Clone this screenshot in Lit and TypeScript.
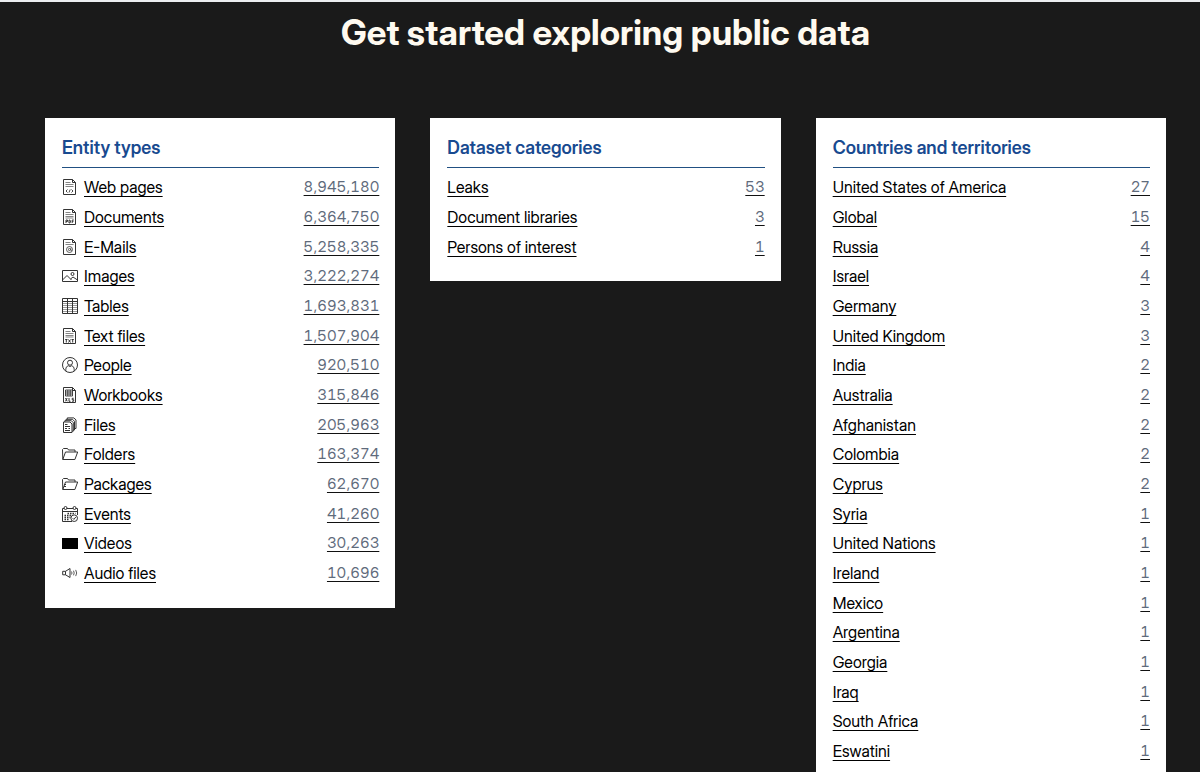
import { LitElement, html, svg, css, nothing } from "lit";
import { customElement, property } from "lit/decorators.js";

type Row = { label: string; count: string; icon?: string };

const sheet = svg`<path d="M1.5.5h9l3 3v12h-12zM10.5.5v3h3" /><path d="M3.5 3.5h5M3.5 5.5h8M3.5 7.5h8" stroke="#666" stroke-width=".8" />`;

const icons: Record<string, unknown> = {
  web: svg`${sheet}<path d="M5.500 10.500L4 12l1.500 1.500M9.500 10.500L11 12l-1.500 1.500M8.200 10.500l-1.200 3" stroke-width=".9" />`,
  pdf: svg`${sheet}<path d="M3.500 9h8" stroke="#666" stroke-width=".8" /><path d="M4 14v-3h1.500v1.500H4M7 11v3h.8l.6-1v-1l-.6-1zM10.200 14v-3h1.600M10.200 12.500h1.200" />`,
  mail: svg`<path d="M1.500.5h9l3 3v12h-12zM10.500.5v3h3" /><path d="M3.500 3.500h5M3.500 5.500h8" stroke="#666" stroke-width=".8" /><circle cx="7.500" cy="10.500" r="3" stroke-width=".8" /><circle cx="7.500" cy="10.500" r="1.100" stroke-width=".8" /><path d="M8.700 9.300v1.700l1.300.5" stroke-width=".7" />`,
  image: svg`<path d="M.5 2.500h15v11H.5zM.5 12l4.500-4.500 4.500 4.500M8.500 11l2.500-2 4.500 3" /><circle cx="10.500" cy="6" r="1.500" />`,
  table: svg`<path d="M.5.5h15v15H.5zM.5 3.500h15M5.500.5v15M10.500.5v15" /><path d="M.5 5.500h15M.5 7.500h15M.5 9.500h15M.5 11.500h15M.5 13.500h15" stroke-width=".5" />`,
  text: svg`${sheet}<path d="M3.500 9h8" stroke="#666" stroke-width=".8" /><path d="M3.200 11.500h2.300M4.300 11.500v3M6.500 11.500l2 3M8.500 11.500l-2 3M9.500 11.500h2.300M10.700 11.500v3" />`,
  person: svg`<circle cx="8" cy="8" r="7.500" /><circle cx="8" cy="5.700" r="2.500" /><path d="M3.800 14v-1.500c0-2 1-3.300 2.500-3.800l1.700.8 1.700-.8c1.500.5 2.500 1.800 2.500 3.800V14" />`,
  workbook: svg`<path d="M1.500.5h9l3 3v12h-12zM10.500.5v3h3" /><path d="M3.500 3h7v6h-7zM3.500 5h7M3.500 7h7M5.800 3v6M8.200 3v6" stroke-width=".9" /><path d="M3.500 11l1.700 3.300M5.200 11l-1.700 3.300M7 11v3.300h1.500M11.700 11.300h-1.500v1.400h1.500v1.500h-1.700" />`,
  files: svg`<path d="M1.500 5h6.500l2 2v8.500H1.500z" /><path d="M2.800 5V3.700h6.500l2 2v8.500H10M4 3.700V2.300h6.500l2 2v8.700h-1.200M5.300 2.300V.9h6.500l2.200 2v8.600h-1.500" /><path d="M3 7.500h2.500M3 9.500h5M3 11.500h2M6.500 11.500H8M3 13.500h5" />`,
  folder: svg`<path d="M.8 13.500L.5 3.500l1-1h4l1 1.500h6.500v2M.8 13.500L3.500 6h12.200l-2.800 7.500z" />`,
  package: svg`<path d="M.8 13.500L.5 3.500l1-1h4l1 1.500h6.500v2M.8 13.500L3.500 6h12.200l-2.800 7.500z" /><path d="M2 8.500h2M2 10.500h2" />`,
  event: svg`<path d="M15.500 9V2.500H.5v13h9.500M.5 5.500h15" /><circle cx="3.500" cy="2" r="1.500" fill="#fff" /><circle cx="12.500" cy="2" r="1.500" fill="#fff" /><path d="M5.500 7.500h8M2.500 9.500h8M2.500 11.500h6M2.500 13.500h5" stroke-width="1.400" stroke-dasharray="1.500 1" /><circle cx="12.200" cy="12.200" r="3.300" fill="#fff" /><path d="M10.700 12.200l1.200 1.200 2-2.500" />`,
  video: svg`<path d="M0 3h16v11H0z" fill="#000" stroke="none" />`,
  audio: svg`<path d="M.7 6.300h2.800L8 3.500v9L3.500 9.800H.7zM3.500 6.300v3.500" /><path d="M9.500 6.500q1 1.500 0 3M11.500 5.700q1.400 2.300 0 4.600M13.700 4.900q2 3.100 0 6.200" stroke-width=".8" />`,
};

const entityTypes: Row[] = [
  { label: "Web pages", count: "8,945,180", icon: "web" },
  { label: "Documents", count: "6,364,750", icon: "pdf" },
  { label: "E-Mails", count: "5,258,335", icon: "mail" },
  { label: "Images", count: "3,222,274", icon: "image" },
  { label: "Tables", count: "1,693,831", icon: "table" },
  { label: "Text files", count: "1,507,904", icon: "text" },
  { label: "People", count: "920,510", icon: "person" },
  { label: "Workbooks", count: "315,846", icon: "workbook" },
  { label: "Files", count: "205,963", icon: "files" },
  { label: "Folders", count: "163,374", icon: "folder" },
  { label: "Packages", count: "62,670", icon: "package" },
  { label: "Events", count: "41,260", icon: "event" },
  { label: "Videos", count: "30,263", icon: "video" },
  { label: "Audio files", count: "10,696", icon: "audio" },
];

const categories: Row[] = [
  { label: "Leaks", count: "53" },
  { label: "Document libraries", count: "3" },
  { label: "Persons of interest", count: "1" },
];

const countries: Row[] = [
  ["United States of America", "27"], ["Global", "15"], ["Russia", "4"], ["Israel", "4"],
  ["Germany", "3"], ["United Kingdom", "3"], ["India", "2"], ["Australia", "2"],
  ["Afghanistan", "2"], ["Colombia", "2"], ["Cyprus", "2"], ["Syria", "1"],
  ["United Nations", "1"], ["Ireland", "1"], ["Mexico", "1"], ["Argentina", "1"],
  ["Georgia", "1"], ["Iraq", "1"], ["South Africa", "1"], ["Eswatini", "1"],
].map(([label, count]) => ({ label, count }));

@customElement("stat-card")
export class StatCard extends LitElement {
  @property() heading = "";
  @property({ attribute: false }) rows: Row[] = [];

  static styles = css`
    :host {
      display: block;
      background: #fff;
      padding: 16px 16px 20px 17px;
    }
    .title {
      margin: 0 0 4px;
      padding: 4px 0 9px;
      border-bottom: 1px solid #215082;
      color: #184a90;
      font-size: 18px;
      font-weight: 600;
      line-height: 20px;
    }
    .list {
      list-style: none;
      margin: 0;
      padding: 0;
      display: grid;
      grid-auto-rows: 30px 30px 29px;
    }
    .link {
      display: flex;
      align-items: center;
      height: 100%;
      color: #000;
      line-height: 20px;
      text-decoration: none;
    }
    .icon {
      width: 16px;
      height: 16px;
      margin-right: 6px;
      fill: none;
      stroke: #333;
    }
    .label {
      text-decoration: underline 1px;
      text-decoration-skip-ink: none;
      text-underline-offset: 3px;
    }
    .count {
      margin-left: auto;
      color: #5f6b7c;
      font-size: 15px;
      font-variant-numeric: tabular-nums;
      text-decoration: underline 1px #111;
      text-underline-offset: 3px;
    }
  `;

  render() {
    return html`
      <h2 class="title">${this.heading}</h2>
      <ul class="list">
        ${this.rows.map(
          (row) => html`<li>
            <a class="link" href="#">
              ${row.icon
                ? html`<svg class="icon" viewBox="0 0 16 16" aria-hidden="true">${icons[row.icon]}</svg>`
                : nothing}
              <span class="label">${row.label}</span>
              <span class="count">${row.count}</span>
            </a>
          </li>`
        )}
      </ul>
    `;
  }
}

@customElement("app-root")
export class AppRoot extends LitElement {
  static styles = css`
    :host {
      display: block;
      box-sizing: border-box;
      height: 100vh;
      overflow: hidden;
      background: #1a1a1a;
      border-top: 2px solid #eceef0;
      font-family: "Inter Display", Inter, "Liberation Sans", sans-serif;
      font-size: 16px;
    }
    .page {
      padding: 8px 34px 32px 45px;
    }
    .headline {
      margin: 0 0 64px;
      color: #fffaf0;
      font-size: 35px;
      font-weight: 700;
      line-height: 44px;
      text-align: center;
    }
    .cards {
      display: grid;
      grid-template-columns: repeat(3, 1fr);
      align-items: start;
      gap: 35px;
    }
  `;

  render() {
    return html`
      <main class="page">
        <h1 class="headline">Get started exploring public data</h1>
        <div class="cards">
          <stat-card heading="Entity types" .rows=${entityTypes}></stat-card>
          <stat-card heading="Dataset categories" .rows=${categories}></stat-card>
          <stat-card heading="Countries and territories" .rows=${countries}></stat-card>
        </div>
      </main>
    `;
  }
}
